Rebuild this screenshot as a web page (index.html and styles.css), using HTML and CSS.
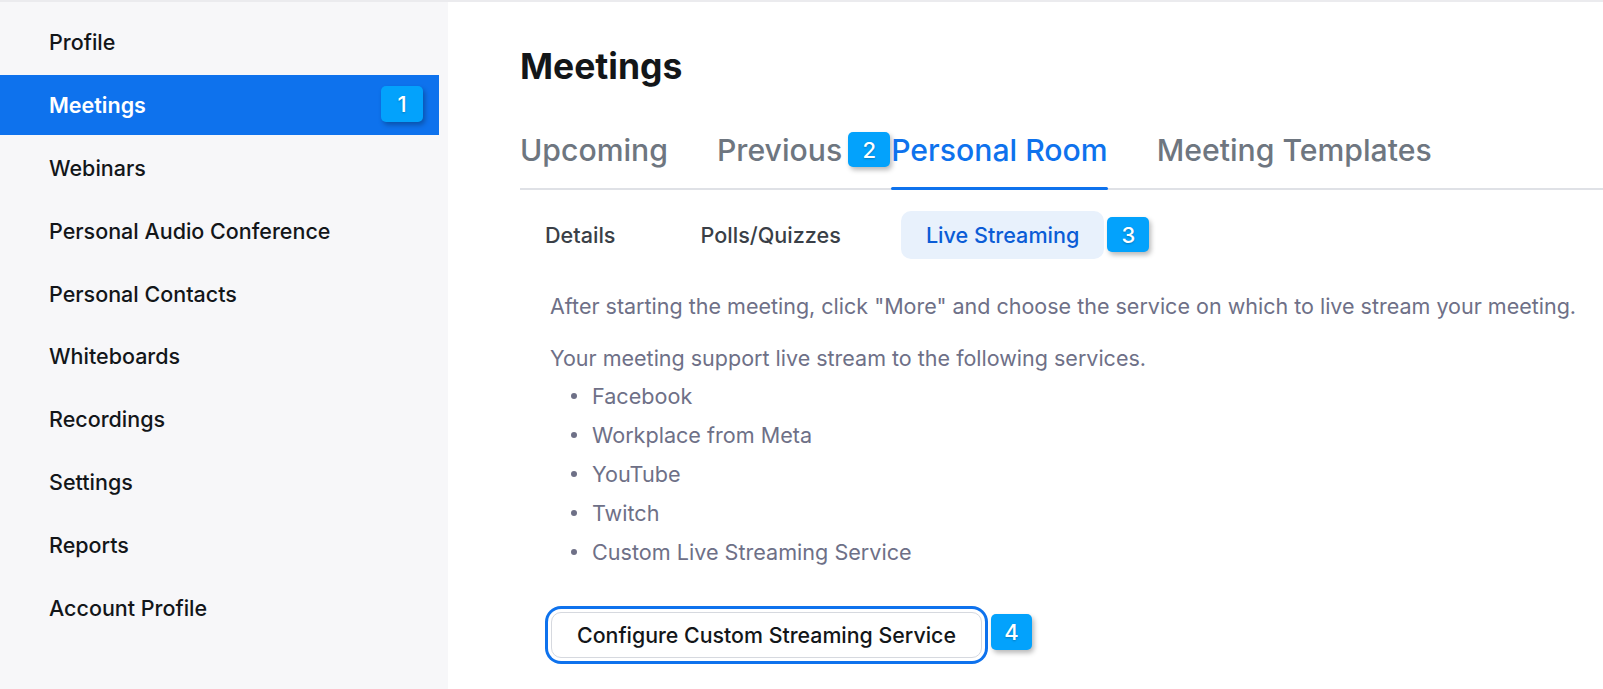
FILE: index.html
```html
<!DOCTYPE html>
<html lang="en">
<head>
<meta charset="utf-8">
<title>Meetings</title>
<link rel="stylesheet" href="styles.css">
</head>
<body>
<div class="page">
  <aside class="sidebar">
    <nav class="nav">
      <a class="nav-item">Profile</a>
      <a class="nav-item active">Meetings<span class="badge badge-nav">1</span></a>
      <a class="nav-item">Webinars</a>
      <a class="nav-item">Personal Audio Conference</a>
      <a class="nav-item">Personal Contacts</a>
      <a class="nav-item">Whiteboards</a>
      <a class="nav-item">Recordings</a>
      <a class="nav-item">Settings</a>
      <a class="nav-item">Reports</a>
      <a class="nav-item">Account Profile</a>
    </nav>
  </aside>
  <main class="main">
    <h1 class="title">Meetings</h1>
    <div class="tabs">
      <span class="tab">Upcoming</span>
      <span class="tab">Previous<span class="badge badge-tab">2</span></span>
      <span class="tab active">Personal Room</span>
      <span class="tab">Meeting Templates</span>
    </div>
    <div class="subtabs">
      <span class="subtab">Details</span>
      <span class="subtab">Polls/Quizzes</span>
      <span class="subtab active">Live Streaming<span class="badge badge-sub">3</span></span>
    </div>
    <div class="body">
      <p class="text">After starting the meeting, click "More" and choose the service on which to live stream your meeting.</p>
      <p class="text">Your meeting support live stream to the following services.</p>
      <ul class="services">
        <li>Facebook</li>
        <li>Workplace from Meta</li>
        <li>YouTube</li>
        <li>Twitch</li>
        <li>Custom Live Streaming Service</li>
      </ul>
      <div class="actions">
        <button class="btn">Configure Custom Streaming Service<span class="badge badge-btn">4</span></button>
      </div>
    </div>
  </main>
</div>
</body>
</html>
```
FILE: styles.css
```css
* { box-sizing: border-box; }
html, body { margin: 0; padding: 0; }
body {
  font-family: Inter, "Noto Sans", "Liberation Sans", sans-serif;
  background: #ffffff;
  color: #131619;
  width: 1603px;
  height: 689px;
  overflow: hidden;
}
.page {
  display: flex;
  height: 689px;
  border-top: 2px solid #ebebee;
}
.sidebar {
  width: 448px;
  flex: none;
  background: #f7f7f9;
  padding-top: 10px;
}
.nav {
  display: flex;
  flex-direction: column;
  gap: 2.9px;
  width: 439px;
}
.nav-item {
  position: relative;
  display: block;
  height: 60px;
  line-height: 60px;
  padding-left: 49px;
  font-size: 21.5px;
  font-weight: 500;
  color: #131619;
}
.nav-item.active {
  background: #0e72ed;
  color: #ffffff;
  font-weight: 600;
}
.badge {
  position: absolute;
  display: flex;
  align-items: center;
  justify-content: center;
  width: 42px;
  height: 35px;
  border-radius: 5px;
  background: #03a2fc;
  color: #ffffff;
  font-family: Inter, "Liberation Sans", sans-serif;
  font-size: 22px;
  font-weight: 500;
  line-height: 1;
  box-shadow: 2px 3px 5px rgba(0, 0, 0, 0.28);
  text-shadow: 0 1px 2px rgba(0, 0, 0, 0.25);
}
.badge-nav { right: 16px; top: 11px; height: 36px; }
.main {
  flex: 1;
  padding-top: 45px;
  padding-left: 72px;
}
.title {
  margin: 0;
  font-size: 35.5px;
  line-height: 40px;
  font-weight: 700;
  color: #131619;
}
.tabs {
  display: flex;
  gap: 49px;
  margin-top: 45px;
  border-bottom: 2px solid #dfe1e6;
}
.tab {
  position: relative;
  font-size: 30.2px;
  line-height: 36px;
  font-weight: 500;
  color: #6e7680;
  padding-bottom: 20px;
}
.tab.active { color: #0e72ed; }
.tab.active::after {
  content: "";
  position: absolute;
  left: 0;
  right: 0;
  bottom: -2px;
  height: 3px;
  border-radius: 2px;
  background: #0e72ed;
}
.badge-tab { left: calc(100% + 6px); top: 0; }
.subtabs {
  display: flex;
  gap: 35px;
  margin-top: 21px;
}
.subtab {
  position: relative;
  height: 48px;
  line-height: 48px;
  padding: 0 25px;
  font-size: 21.6px;
  font-weight: 500;
  color: #3a3f47;
  border-radius: 10px;
}
.subtab.active {
  background: #e8f1fc;
  color: #0b5cd6;
}
.badge-sub { left: calc(100% + 3px); top: 6px; }
.body {
  padding-left: 30px;
  margin-top: 33px;
}
.text {
  margin: 0 0 24px;
  font-size: 21.5px;
  line-height: 28px;
  color: #6e7087;
}
.services {
  list-style: none;
  margin: -20px 0 0;
  padding: 0;
}
.services li {
  display: flex;
  align-items: center;
  gap: 15px;
  height: 39px;
  padding-left: 21px;
  font-size: 21.6px;
  color: #6e7087;
}
.services li::before {
  content: "";
  width: 6px;
  height: 6px;
  border-radius: 50%;
  background: #6e7087;
  flex: none;
}
.actions {
  margin-top: 41px;
  padding-left: 1px;
}
.btn {
  position: relative;
  height: 46px;
  padding: 0 25px;
  border: 1px solid #d6d9df;
  border-radius: 10px;
  background: #ffffff;
  font-family: Inter, "Liberation Sans", sans-serif;
  font-size: 21.35px;
  font-weight: 500;
  color: #131619;
  box-shadow: 0 0 0 3px #ffffff, 0 0 0 6px #0e72ed;
}
.badge-btn { left: calc(100% + 10px); top: 1px; height: 36px; width: 41px; }
```
